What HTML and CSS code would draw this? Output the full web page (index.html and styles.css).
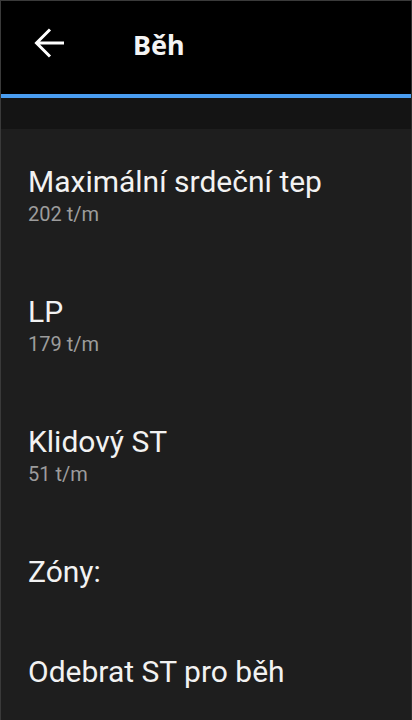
FILE: index.html
```html
<!DOCTYPE html>
<html lang="cs">
<head>
<meta charset="utf-8">
<title>Běh</title>
<link rel="stylesheet" href="styles.css">
</head>
<body>
<div class="screen">
  <div class="header">
    <svg class="back" width="32" height="32" viewBox="0 0 32 32" aria-hidden="true">
      <path d="M2 15H30M16 1.5L2.5 15L16 28.5" fill="none" stroke="#fff" stroke-width="3"/>
    </svg>
    <span class="title">Běh</span>
  </div>
  <div class="accent"></div>
  <div class="band"></div>
  <ul class="list">
    <li class="item">
      <div class="label">Maximální srdeční tep</div>
      <div class="value">202 t/m</div>
    </li>
    <li class="item">
      <div class="label">LP</div>
      <div class="value">179 t/m</div>
    </li>
    <li class="item">
      <div class="label">Klidový ST</div>
      <div class="value">51 t/m</div>
    </li>
    <li class="item">
      <div class="label">Zóny:</div>
    </li>
    <li class="item">
      <div class="label">Odebrat ST pro běh</div>
    </li>
  </ul>
</div>
</body>
</html>
```

FILE: styles.css
```css
html, body {
	margin: 0;
	padding: 0;
	background-color: #1e1e1e;
}
.screen {
	min-height: 720px;
	box-sizing: border-box;
	border-top: 1px solid #3a3a3a;
	border-left: 1px solid #3a3a3a;
	border-right: 1px solid #2e2e2e;
	background-color: #1e1e1e;
	font-family: Roboto, "Noto Sans", sans-serif;
	color: #f2f2f2;
}
.header {
	height: 93px;
	box-sizing: border-box;
	padding: 0 0 6px 33px;
	background-color: #000;
	display: flex;
	align-items: center;
}
.back {
	display: block;
	flex: none;
	margin-top: -2px;
}
.title {
	margin-left: 67px;
	font-family: "Noto Sans", sans-serif;
	font-weight: bold;
	font-size: 27px;
	color: #f4f4f4;
}
.accent {
	height: 4px;
	background-color: #4a9df0;
}
.band {
	height: 31px;
	background-color: #141414;
}
.list {
	list-style: none;
	margin: 0;
	padding: 0;
}
.item {
	padding: 35px 0 30px 27px;
}
.label {
	font-size: 30px;
	line-height: 35px;
}
.value {
	font-size: 20px;
	line-height: 30px;
	color: #9c9c9c;
}
```
